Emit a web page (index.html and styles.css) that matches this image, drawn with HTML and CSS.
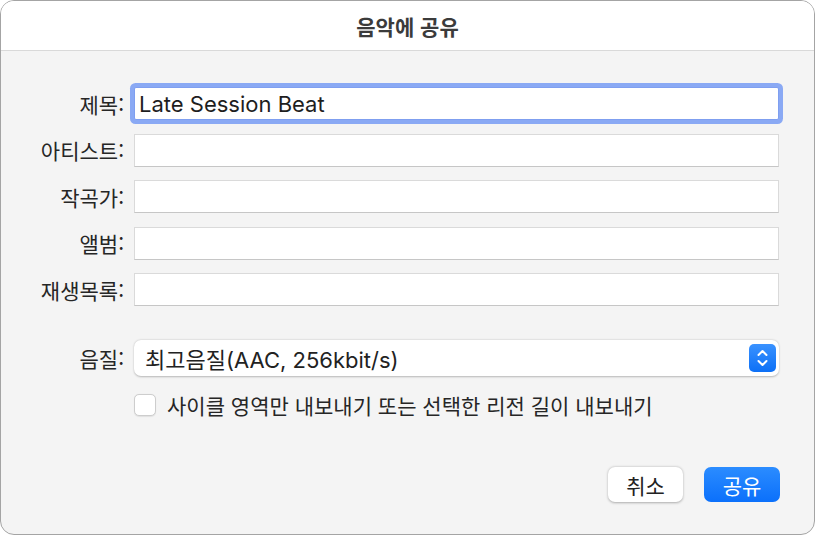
FILE: index.html
```html
<!DOCTYPE html>
<html lang="ko">
<head>
    <meta charset="UTF-8">
    <title>음악에 공유</title>
    <link rel="stylesheet" href="styles.css">
</head>
<body>
    <div class="window">
        <header class="titlebar">음악에 공유</header>
        <form class="form">
            <label class="label" for="title">제목:</label>
            <input class="field focused" id="title" type="text" value="Late Session Beat">
            <label class="label" for="artist">아티스트:</label>
            <input class="field" id="artist" type="text">
            <label class="label" for="composer">작곡가:</label>
            <input class="field" id="composer" type="text">
            <label class="label" for="album">앨범:</label>
            <input class="field" id="album" type="text">
            <label class="label" for="playlist">재생목록:</label>
            <input class="field" id="playlist" type="text">

            <span class="label quality-label">음질:</span>
            <div class="popup">
                <span class="popup-text">최고음질(AAC, 256kbit/s)</span>
                <span class="stepper">
                    <svg width="27" height="28" viewBox="0 0 27 28">
                        <path d="M9.5 11 L13.5 7 L17.5 11" fill="none" stroke="#fff" stroke-width="2" stroke-linecap="round" stroke-linejoin="round"/>
                        <path d="M9.5 17 L13.5 21 L17.5 17" fill="none" stroke="#fff" stroke-width="2" stroke-linecap="round" stroke-linejoin="round"/>
                    </svg>
                </span>
            </div>

            <label class="check-row">
                <span class="checkbox"></span>
                <span>사이클 영역만 내보내기 또는 선택한 리전 길이 내보내기</span>
            </label>
        </form>
        <footer class="buttons">
            <button class="btn" type="button">취소</button>
            <button class="btn primary" type="button">공유</button>
        </footer>
    </div>
</body>
</html>
```

FILE: styles.css
```css
* { margin: 0; padding: 0; box-sizing: border-box; }
body {
    background: #fff;
    font-family: Inter, "Noto Sans CJK KR", sans-serif;
}
.window {
    width: 815px;
    height: 535px;
    border: 1.5px solid #a4a4a4;
    border-radius: 14px;
    background: #f4f4f4;
    overflow: hidden;
    display: flex;
    flex-direction: column;
}
.titlebar {
    height: 50px;
    background: #fff;
    border-bottom: 1px solid #d9d9d9;
    display: flex;
    align-items: center;
    justify-content: center;
    font-family: "Noto Sans CJK KR", sans-serif;
    font-weight: 700;
    font-size: 21px;
    color: #3b3b3b;
}
.form {
    padding: 36px 35px 0 20px;
    display: grid;
    grid-template-columns: 103px 1fr;
    column-gap: 10px;
    row-gap: 13.5px;
    align-items: center;
}
.label {
    text-align: right;
    font-family: "Noto Sans CJK KR", sans-serif;
    font-size: 21px;
    color: #262626;
    white-space: nowrap;
}
.field {
    height: 33px;
    background: #fff;
    border: 1px solid #dadada;
    border-bottom-color: #c6c6c6;
    font-family: Inter, "Noto Sans CJK KR", sans-serif;
    font-size: 22px;
    padding: 0 4px;
    color: #1e1e1e;
    outline: none;
}
.field.focused {
    border-color: #7f9ff0;
    border-radius: 2px;
    box-shadow: 0 0 0 4px #8aa9f4;
}
.quality-label,
.popup { margin-top: 20.5px; }
.popup {
    height: 36px;
    background: #fff;
    border-radius: 7px;
    box-shadow: 0 0.5px 2px rgba(0, 0, 0, 0.25);
    display: flex;
    align-items: center;
    justify-content: space-between;
    padding: 0 3px 0 11px;
    font-size: 22px;
    color: #222;
}
.stepper {
    width: 27px;
    height: 28px;
    border-radius: 5px;
    background: linear-gradient(#3a92ff, #0d70f6);
    display: flex;
}
.check-row {
    grid-column: 2;
    display: flex;
    align-items: center;
    gap: 11px;
    font-family: "Noto Sans CJK KR", sans-serif;
    font-size: 21px;
    color: #262626;
}
.checkbox {
    width: 22px;
    height: 22px;
    background: #fff;
    border: 1px solid #cdcdcd;
    border-radius: 5px;
    box-shadow: 0 0.5px 1px rgba(0, 0, 0, 0.08);
}
.buttons {
    margin-top: auto;
    display: flex;
    justify-content: flex-end;
    gap: 21px;
    padding: 0 34px 32px 0;
}
.btn {
    width: 75px;
    height: 35px;
    border: none;
    border-radius: 7px;
    background: #fff;
    box-shadow: 0 0.5px 2.5px rgba(0, 0, 0, 0.3);
    font-family: "Noto Sans CJK KR", sans-serif;
    font-size: 21px;
    color: #222;
}
.btn.primary {
    width: 76px;
    background: linear-gradient(#2b8cff, #0b70fb);
    color: #fff;
    box-shadow: none;
}
```
